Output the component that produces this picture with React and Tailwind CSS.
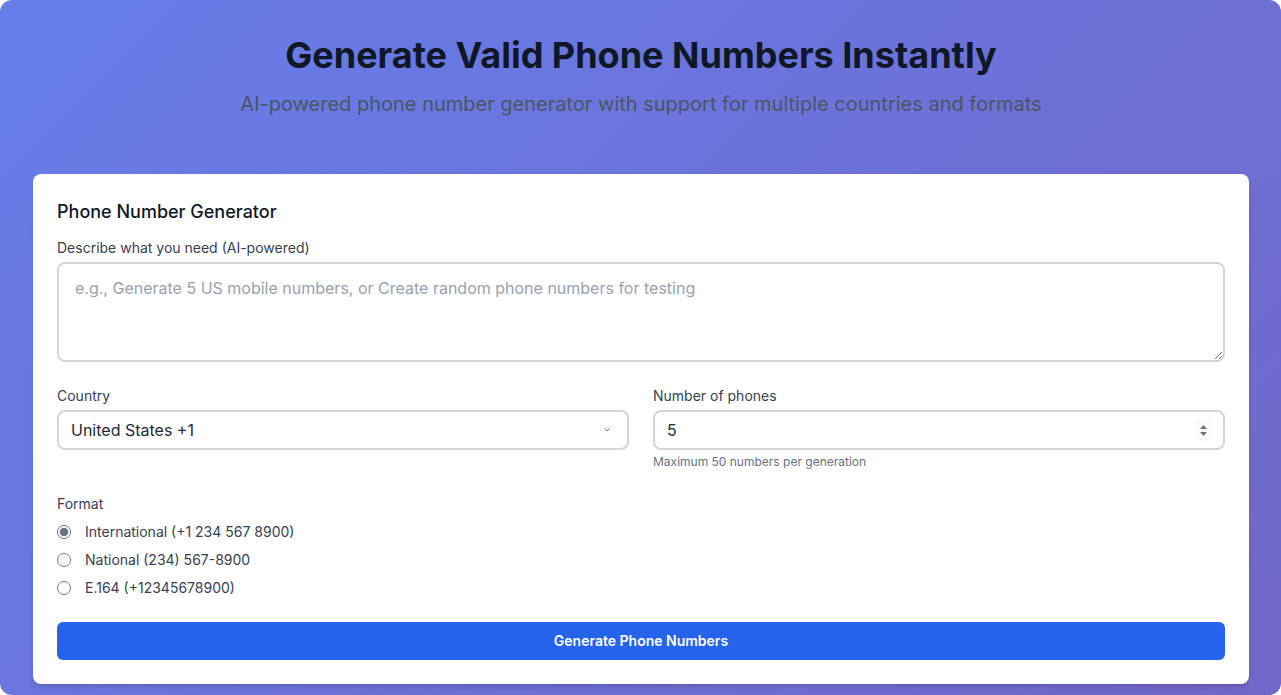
import { useState } from 'react';

const formats = [
  { id: 'international', label: 'International (+1 234 567 8900)' },
  { id: 'national', label: 'National (234) 567-8900' },
  { id: 'e164', label: 'E.164 (+12345678900)' },
];

export default function App() {
  const [prompt, setPrompt] = useState('');
  const [country, setCountry] = useState('US');
  const [count, setCount] = useState(5);
  const [format, setFormat] = useState('international');

  return (
    <div className="min-h-[695px] rounded-xl bg-[linear-gradient(135deg,#667eea_0%,#7267c8_100%)] pl-[33px] pr-8 pt-[35px] pb-[11px] font-['Inter','Liberation_Sans',sans-serif]">
      {/* Hero */}
      <div className="text-center">
        <h1 className="text-4xl font-bold text-gray-900">Generate Valid Phone Numbers Instantly</h1>
        <p className="mt-[15px] text-xl text-gray-600">
          AI-powered phone number generator with support for multiple countries and formats
        </p>
      </div>

      {/* Generator card */}
      <div className="mt-[56px] rounded-lg bg-white p-6 shadow-md">
        <h2 className="text-lg font-medium text-gray-900">Phone Number Generator</h2>

        <label htmlFor="prompt" className="mt-3 mb-1 block text-sm text-gray-700">
          Describe what you need (AI-powered)
        </label>
        <textarea
          id="prompt"
          rows={3}
          value={prompt}
          onChange={(e) => setPrompt(e.target.value)}
          placeholder="e.g., Generate 5 US mobile numbers, or Create random phone numbers for testing"
          className="block h-[100px] w-full rounded-lg border-2 border-gray-300 px-4 py-3 text-base text-gray-800 placeholder:text-gray-400"
        />

        <div className="mt-6 grid grid-cols-2 gap-6">
          <div>
            <label htmlFor="country" className="mb-1 block text-sm text-gray-700">
              Country
            </label>
            <div className="relative">
              <select
                id="country"
                value={country}
                onChange={(e) => setCountry(e.target.value)}
                className="block h-10 w-full appearance-none rounded-lg border-2 border-gray-300 px-3 text-base text-gray-800"
              >
                <option value="US">United States +1</option>
                <option value="GB">United Kingdom +44</option>
                <option value="CA">Canada +1</option>
              </select>
              <svg
                className="pointer-events-none absolute right-[19px] top-[18px] h-[4px] w-[6px] text-gray-500"
                viewBox="0 0 6 4"
                fill="none"
                stroke="currentColor"
                strokeWidth="1"
              >
                <path d="M0.5 0.5 3 3 5.5 0.5" />
              </svg>
            </div>
          </div>
          <div>
            <label htmlFor="count" className="mb-1 block text-sm text-gray-700">
              Number of phones
            </label>
            <div className="relative">
              <input
                id="count"
                type="number"
                min={1}
                max={50}
                value={count}
                onChange={(e) => setCount(e.target.value)}
                className="block h-10 w-full appearance-none rounded-lg border-2 border-gray-300 px-3 text-base text-gray-800 [appearance:textfield] [&::-webkit-inner-spin-button]:appearance-none [&::-webkit-outer-spin-button]:appearance-none"
              />
              <div className="pointer-events-none absolute right-[14px] top-[9px] flex h-[22px] w-[15px] flex-col items-center justify-center gap-[3px] bg-gray-50">
                <svg className="h-[4px] w-[7px] text-gray-500" viewBox="0 0 7 4" fill="currentColor">
                  <path d="M3.5 0 7 4H0z" />
                </svg>
                <svg className="h-[4px] w-[7px] text-gray-500" viewBox="0 0 7 4" fill="currentColor">
                  <path d="M0 0h7L3.5 4z" />
                </svg>
              </div>
            </div>
            <p className="mt-1 text-xs text-gray-500">Maximum 50 numbers per generation</p>
          </div>
        </div>

        <div className="mt-6">
          <span className="mb-2 block text-sm text-gray-700">Format</span>
          <div className="space-y-2">
            {formats.map((f) => (
              <label key={f.id} className="flex h-5 items-center gap-[14px] text-sm text-gray-700">
                <input
                  type="radio"
                  name="format"
                  checked={format === f.id}
                  onChange={() => setFormat(f.id)}
                  className="size-[14px] accent-gray-500"
                />
                {f.label}
              </label>
            ))}
          </div>
        </div>

        <button
          type="button"
          className="mt-6 flex h-[38px] w-full items-center justify-center rounded-md bg-[#2563eb] text-sm font-semibold text-white"
        >
          Generate Phone Numbers
        </button>
      </div>
    </div>
  );
}
